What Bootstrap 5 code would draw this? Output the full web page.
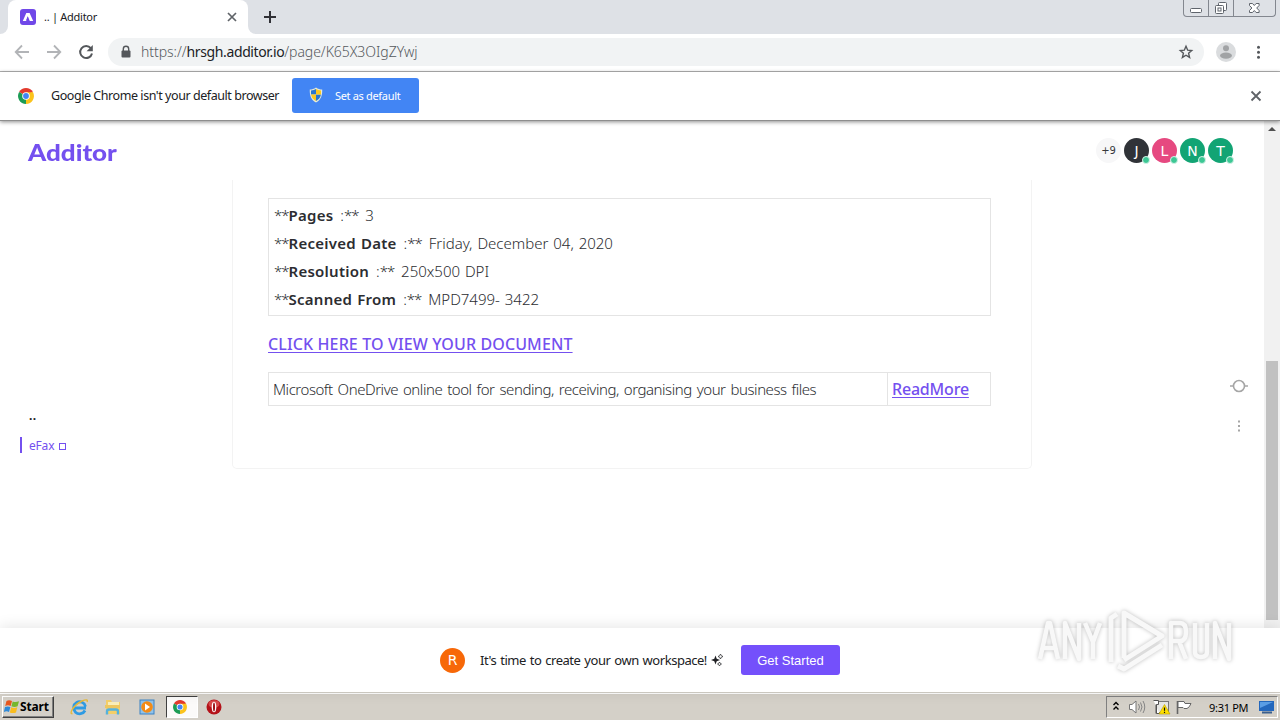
<!DOCTYPE html>
<html lang="en">
<head>
  <meta charset="UTF-8">
  <title>.. | Additor</title>
  <meta name="viewport" content="width=device-width, initial-scale=1.0"/>
  <link href="https://cdn.jsdelivr.net/npm/bootstrap@5.3.3/dist/css/bootstrap.min.css" rel="stylesheet">
  <style>
    body {
      width: 1280px;
      height: 720px;
      overflow: hidden;
      font-family: "Noto Sans", "Liberation Sans", sans-serif;
      font-size: 12px;
      line-height: 1;
      color: #202124;
      background: #fff;
    }
    span, a { white-space: nowrap; }
    svg { display: block; flex: none; }

    /* browser chrome */
    .tab-strip { height: 34px; background: #dee1e6; }
    .tab-edge { width: 8px; background: #fff; }
    .tab-edge div { height: 34px; background: #dee1e6; }
    .tab-edge.start div { border-bottom-right-radius: 8px; }
    .tab-edge.end div { border-bottom-left-radius: 8px; }
    .tab-active { width: 240px; background: #fff; border-radius: 8px 8px 0 0; padding: 0 10px 0 12px; }
    .tab-title { font-size: 11px; margin: -1px 0 0 8px; letter-spacing: -.27px; }
    .win-buttons { width: 93px; height: 17px; margin-right: 4px; border: 1px solid #83878f; border-top: 0; border-radius: 0 0 4px 4px; }
    .toolbar { height: 38px; border-bottom: 1px solid #b4b4b4; padding-bottom: 1px; }
    .omnibox { width: 1096px; height: 28px; border-radius: 14px; background: #f1f3f4; margin-left: 12px; padding: 0 10px 0 12px; }
    .url { font-size: 14px; font-weight: 300; color: #55595d; margin-left: 9px; letter-spacing: -.05px; }
    .url b { font-weight: 400; color: #202124; letter-spacing: -.38px; }
    .infobar { height: 49px; padding: 0 0 1px 18px; border-bottom: 1px solid #8e8e8e; box-shadow: 0 1px 4px rgba(0,0,0,.45); z-index: 2; }
    .info-text { font-size: 12.5px; margin-left: 17px; padding-top: 2px; width: 228px; letter-spacing: -.44px; }
    .btn-default-browser { width: 127px; height: 35px; margin-left: 13px; background: #4285f4; border-radius: 3px; color: #fff; padding: 0 0 1px 17px; font-size: 11px; letter-spacing: -.33px; }

    /* page */
    .page-body { height: 507px; }
    .page-main { width: 1264px; }
    .site-header { height: 59px; padding: 0 31px 0 28px; }
    .brand-name { font-family: Lato, sans-serif; font-weight: 900; font-size: 23px; color: #7450ef; transform: scaleX(1.13); transform-origin: left; padding-top: 3px; }
    .avatar { width: 25px; height: 25px; border-radius: 50%; color: #fff; font-family: "DejaVu Sans", sans-serif; font-size: 14px; position: relative; }
    .avatar i { position: absolute; right: -1px; bottom: -1px; width: 8px; height: 8px; border-radius: 50%; background: #3cc794; border: 1px solid #d5f3e8; }
    .avatar.more { background: #f7f7f8; color: #36373b; font-size: 10px; }
    .outline-nav { width: 232px; padding: 230px 0 0 20px; }
    .outline-title { padding-left: 9px; letter-spacing: .5px; }
    .outline-current { border-left: 2px solid #7450ef; height: 16px; padding: 2px 0 0 7px; color: #7450ef; letter-spacing: -.2px; margin-top: 15px; }
    .doc-sheet { width: 800px; height: 289px; border: 1px solid #f3f3f3; border-top: 0; border-radius: 0 0 5px 5px; padding: 18px 40px 0 35px; font-size: 15px; font-weight: 300; color: #2c2d31; }
    .doc-box { border: 1px solid #e4e4e4; }
    .fax-info { height: 118px; padding: 2px 0 0 5px; word-spacing: 1px; }
    .fax-info div { height: 28px; line-height: 28px; }
    .fax-info b { font-weight: 600; letter-spacing: .25px; margin-right: 2px; }
    .fax-info i { font-style: normal; letter-spacing: -1px; }
    .fax-info b ~ i { margin-right: 2px; }
    .doc-sheet a { color: #7450ef; font-size: 16px; font-weight: 500; text-underline-offset: 2px; text-decoration-thickness: 1px; }
    .doc-link { height: 56px; line-height: 56px; letter-spacing: .12px; }
    .tool-row { height: 34px; line-height: 33px; }
    .tool-row .first { width: 619px; padding-left: 4px; border-right: 1px solid #e4e4e4; letter-spacing: -.46px; word-spacing: 1.5px; }
    .tool-row .second { padding-left: 4px; letter-spacing: -.2px; }
    .side-tools { width: 50px; padding-top: 198px; }
    .scroll-track { width: 16px; background: #f1f1f1; }
    .scroll-thumb { width: 12px; height: 259px; margin-top: 224px; background: #c1c1c1; }
    .cta-bar { height: 64px; background: #fff; box-shadow: 0 -1px 14px rgba(0,0,0,.11); z-index: 1; }
    .cta-avatar { width: 25px; height: 25px; border-radius: 50%; background: #f76808; color: #fff; font-family: "DejaVu Sans", sans-serif; font-size: 14px; }
    .cta-text { font-size: 13px; margin-left: 15px; width: 227px; letter-spacing: -.47px; word-spacing: 1px; }
    .btn-start-now { width: 99px; height: 30px; border-radius: 3px; background: #7450fb; color: #fff; font-size: 13px; margin-left: 17px; font-family: "Liberation Sans", sans-serif; }

    /* taskbar */
    .taskbar { height: 28px; background: #d4d0c8; border-top: 1px solid #d4d0c8; box-shadow: inset 0 1px #fff; padding: 3px 2px 2px; }
    .start-button { width: 52px; height: 22px; border: 1px solid; border-color: #fff #404040 #404040 #fff; box-shadow: inset -1px -1px #808080; font-size: 12px; font-weight: 700; color: #000; padding-left: 1px; letter-spacing: -.15px; }
    .task-pressed { width: 32px; height: 22px; border: 1px solid; border-color: #404040 #fff #fff #404040; background: #fbfaf9; }
    .tray { width: 172px; height: 22px; border: 1px solid; border-color: #808080 #fff #fff #808080; color: #000; padding-left: 5px; }
    .tray-clock { width: 40px; margin-left: 13px; font-size: 11px; letter-spacing: -.3px; }
    .watermark { position: absolute; left: 1030px; top: 598px; z-index: 5; filter: drop-shadow(0 0 2px rgba(0,0,0,.26)); }
  </style>
</head>
<body class="d-flex flex-column">

  <svg width="0" height="0" class="position-absolute">
    <symbol id="chrome" viewBox="0 0 16 16">
      <path d="M8 8 1.100 4A8 8 0 0 1 14.900 4Z" fill="#e33b2e"/>
      <path d="M8 8 14.900 4A8 8 0 0 1 8 16Z" fill="#fbc31c"/>
      <path d="M8 8V16A8 8 0 0 1 1.100 4Z" fill="#1c9c55"/>
      <path d="M8 4.200H15L12 10 8 16 11 9Z" fill="#fbc31c"/>
      <circle cx="8" cy="8" r="3.800" fill="#fff"/>
      <circle cx="8" cy="8" r="2.900" fill="#4285f4"/>
    </symbol>
  </svg>

  <div class="tab-strip d-flex flex-shrink-0">
    <div class="tab-edge start"><div></div></div>
    <div class="tab-active d-flex align-items-center">
      <svg width="16" height="16" viewBox="0 0 16 16"><rect width="16" height="16" rx="3" fill="#7048e8"/><path d="M6.300 4H9.600L13.200 11.900H9.800L7.800 7.500 6.200 11.900H2.800Z" fill="#fff"/><path d="M5.800 11.900 7.700 7.200 8.500 9.500Z" fill="#7048e8"/></svg>
      <span class="tab-title">.. | Additor</span>
      <svg class="ms-auto" width="12" height="12" viewBox="0 0 12 12" stroke="#5f6368" stroke-width="1.700"><path d="M2 2 10 10M10 2 2 10"/></svg>
    </div>
    <div class="tab-edge end"><div></div></div>
    <svg class="mt-2 ms-2" width="12" height="18" viewBox="0 0 12 18" stroke="#303136" stroke-width="2"><path d="M0 9H12M6 3V15"/></svg>
    <div class="win-buttons ms-auto d-flex">
      <svg width="91" height="16" viewBox="0 0 91 16" fill="none" stroke="#5f646c">
        <path d="M24.500 0V16M49.500 0V16" stroke="#83878f"/>
        <rect x="6.500" y="8.500" width="11" height="4" rx="1" fill="#fff"/>
        <rect x="34.500" y="2.500" width="8" height="8" rx="1" fill="#fff"/>
        <rect x="31.500" y="5.500" width="8" height="8" rx="1" fill="#fff"/>
        <rect x="34" y="8" width="3" height="3"/>
        <path d="M65.500 3.500h3l1.800 2 1.800-2h3v2l-2.400 2.500 2.400 2.500v2h-3l-1.800-2-1.800 2h-3v-2l2.400-2.500-2.400-2.500z" fill="#fff"/>
      </svg>
    </div>
  </div>

  <div class="toolbar d-flex align-items-center flex-shrink-0">
    <svg width="96" height="20" viewBox="0 0 96 20" fill="none" stroke="#b2b4b7" stroke-width="1.800">
      <path d="M29 10H16M22 3.500 15.700 10 22 16.500M47 10H60M54 3.500 60.300 10 54 16.500"/>
      <path d="M90.800 6.200A6 6 0 1 0 92 11.500" stroke="#54575b" stroke-width="2"/>
      <path d="M92.800 3V9.200H86.600Z" fill="#54575b" stroke="none"/>
    </svg>
    <div class="omnibox d-flex align-items-center">
      <svg width="12" height="14" viewBox="0 0 12 14"><path d="M3.300 6V4a2.700 2.700 0 0 1 5.400 0V6" fill="none" stroke="#54575b" stroke-width="1.400"/><rect x="1.500" y="5.500" width="9" height="7" rx="1" fill="#54575b"/></svg>
      <span class="url">https://<b>hrsgh.additor.io</b>/page/K65X3OIgZYwj</span>
      <svg class="ms-auto" width="16" height="16" viewBox="0 0 16 16"><path d="M8 2.200 9.700 6.200l4 .4-3.100 2.700 1 4.100L8 11.200 4.400 13.400l1-4.100L2.300 6.600l4-.4Z" fill="none" stroke="#54575b" stroke-width="1.400"/></svg>
    </div>
    <svg width="64" height="20" viewBox="0 0 64 20" class="ms-2">
      <circle cx="14" cy="10" r="10" fill="#dadcde"/><circle cx="14" cy="6.200" r="3" fill="#a1a3a5"/><ellipse cx="14" cy="13.600" rx="6" ry="3.100" fill="#a1a3a5"/>
      <g fill="#54575b"><circle cx="46.500" cy="5.300" r="1.500"/><circle cx="46.500" cy="10.300" r="1.500"/><circle cx="46.500" cy="15.300" r="1.500"/></g>
    </svg>
  </div>

  <div class="infobar d-flex align-items-center flex-shrink-0 bg-white position-relative">
    <svg width="16" height="16"><use href="#chrome"/></svg>
    <span class="info-text">Google Chrome isn't your default browser</span>
    <div class="btn-default-browser d-flex align-items-center">
      <svg width="14" height="16" viewBox="0 0 14 16"><path d="M7 .5C5 2 3 2.500.8 2.500.5 8 2 13 7 15.500 12 13 13.500 8 13.200 2.500 11 2.500 9 2 7 .5Z" fill="#e5ead9"/><path d="M7 2V7.500H2V3.500Q5 3.400 7 2ZM7 7.500H12Q11 12 7 14Z" fill="#2876cf"/><path d="M7 2V7.500H12V3.500Q9 3.400 7 2ZM7 7.500H2Q3 12 7 14Z" fill="#fbc81e"/></svg>
      <span class="ms-2 ps-1">Set as default</span>
    </div>
    <svg class="ms-auto me-3" width="16" height="16" viewBox="0 0 16 16" stroke="#5f6368" stroke-width="1.800"><path d="M3.500 3.500 12.500 12.500M12.500 3.500 3.500 12.500"/></svg>
  </div>

  <div class="page-body d-flex flex-shrink-0">
    <div class="page-main">
      <div class="site-header d-flex align-items-center">
        <span class="brand-name">Additor</span>
        <div class="d-flex ms-auto" style="gap: 3px">
          <div class="avatar more d-flex align-items-center justify-content-center"><span>+9</span></div>
          <div class="avatar d-flex align-items-center justify-content-center" style="background: #303338">J<i></i></div>
          <div class="avatar d-flex align-items-center justify-content-center" style="background: #e64980">L<i></i></div>
          <div class="avatar d-flex align-items-center justify-content-center" style="background: #12a474">N<i></i></div>
          <div class="avatar d-flex align-items-center justify-content-center" style="background: #12a474">T<i></i></div>
        </div>
      </div>
      <div class="d-flex">
        <div class="outline-nav">
          <div class="outline-title fw-bold">..</div>
          <div class="outline-current d-flex align-items-center">
            <span>eFax</span>
            <svg class="ms-1" width="9" height="9" viewBox="0 0 9 9"><rect x="1.500" y="1.500" width="6" height="6" fill="none" stroke="#7450ef"/></svg>
          </div>
        </div>
        <div class="doc-sheet">
          <div class="doc-box fax-info">
            <div><span><i>**</i><b>Pages</b> :<i>**</i> 3</span></div>
            <div><span><i>**</i><b>Received Date</b> :<i>**</i> Friday, December 04, 2020</span></div>
            <div><span><i>**</i><b>Resolution</b> :<i>**</i> 250x500 DPI</span></div>
            <div><span><i>**</i><b>Scanned From</b> :<i>**</i> MPD7499- 3422</span></div>
          </div>
          <div class="doc-link"><a href="#">CLICK HERE TO VIEW YOUR DOCUMENT</a></div>
          <div class="doc-box tool-row d-flex">
            <div class="first"><span>Microsoft OneDrive online tool for sending, receiving, organising your business files</span></div>
            <div class="second"><a href="#">ReadMore</a></div>
          </div>
        </div>
        <div class="side-tools ms-auto">
          <svg width="50" height="60" viewBox="0 0 50 60" fill="none" stroke="#a6a6a6" stroke-width="1.600"><circle cx="25" cy="8" r="5.500"/><path d="M16 8H19.500M30.500 8H34"/><path d="M25 42.500v2M25 47v2M25 51.500v2" stroke-width="2"/></svg>
        </div>
      </div>
    </div>
    <div class="scroll-track d-flex flex-column align-items-center">
      <svg class="mt-1" width="8" height="12" viewBox="0 0 8 12"><path d="M0 6 4 2 8 6Z" fill="#505050"/></svg>
      <div class="scroll-thumb"></div>
    </div>
  </div>

  <div class="cta-bar d-flex align-items-center justify-content-center flex-shrink-0 position-relative">
    <div class="cta-avatar d-flex align-items-center justify-content-center">R</div>
    <span class="cta-text">It's time to create your own workspace!</span>
    <svg class="ms-1" width="13" height="14" viewBox="0 0 13 14"><path d="M4.500 2.500 5.700 5.800 9 7 5.700 8.200 4.500 11.500 3.300 8.200 0 7 3.300 5.800Z" fill="#202124"/><path d="M9.500 1 10.300 2.700 12 3.500 10.300 4.300 9.500 6 8.700 4.300 7 3.500 8.700 2.700ZM8.500 9 9.200 10.300 10.500 11 9.200 11.700 8.500 13 7.800 11.700 6.500 11 7.800 10.300Z" fill="none" stroke="#202124" stroke-width=".7"/></svg>
    <div class="btn-start-now d-flex align-items-center justify-content-center"><span>Get Started</span></div>
  </div>

  <div class="taskbar d-flex align-items-center flex-shrink-0">
    <div class="start-button d-flex align-items-center">
      <svg width="16" height="16" viewBox="0 0 16 16"><path d="M2.500 2Q5 .5 8 2L6.700 7Q4 5.700 1.200 7Z" fill="#e8581f"/><path d="M8.700 2.400Q11.500 3.700 15 2.200L13.600 7.300Q10.500 8.500 7.400 7.300Z" fill="#76b82f"/><path d="M1 8Q3.700 6.800 6.400 8L5 13Q2.500 11.700-.2 13Z" fill="#2f8ad8"/><path d="M7.200 8.300Q10 9.500 13.300 8.300L12 13.400Q9 14.700 5.800 13.400Z" fill="#f9bd20"/></svg>
      <span>Start</span>
    </div>
    <svg width="112" height="20" viewBox="0 0 112 20" fill="none">
      <path d="M32 11H20M31 13.500A6 6 0 1 1 31.500 9.500" stroke="#2f9be3" stroke-width="2.800"/>
      <path d="M18.500 16.500C15 18 18 9 28 4 33 2 34 3 33 5" stroke="#e6b93a" stroke-width="1.400"/>
      <path d="M52 3h5l1 2h8v12H52Z" fill="#f4cf68"/><path d="M54 5h11v6H54Z" fill="#f9eeb9"/><path d="M51 8h15v3H51Z" fill="#edc760"/><path d="M53 17.500v-3q0-2 2-2h7q2 0 2 2v3" stroke="#55b2dc" stroke-width="2.400"/>
      <rect x="86" y="3" width="14" height="14" fill="#8fc2ea" stroke="#3a82c4"/><circle cx="93" cy="10" r="5.800" fill="#f38b16"/><path d="M91 6.500v7l5-3.500Z" fill="#fff"/>
    </svg>
    <div class="task-pressed d-flex align-items-center justify-content-center pe-1"><svg width="14" height="14"><use href="#chrome"/></svg></div>
    <svg class="ms-2" width="16" height="16" viewBox="0 0 16 16"><circle cx="8" cy="8" r="7.500" fill="#b41219"/><ellipse cx="8" cy="5" rx="5.500" ry="3.800" fill="#d84a4b"/><ellipse cx="8" cy="8" rx="2.300" ry="5.300" fill="#fff"/><ellipse cx="8" cy="8" rx="1" ry="4.500" fill="#9d1016"/></svg>
    <div class="tray ms-auto d-flex align-items-center">
      <svg width="84" height="20" viewBox="0 0 84 20" fill="none">
        <path d="M1.500 8 4 5.500 6.500 8M1.500 12.500 4 10 6.500 12.500" stroke="#000" stroke-width="1.400"/>
        <path d="M17.500 7.500H20L24 4V16L20 12.500H17.500Z" fill="#fff" stroke="#777"/><path d="M26.500 7q2 3 0 6M28.500 5.500q3 4.500 0 9M31 4q3.500 6 0 12" stroke="#858585"/>
        <rect x="44.500" y="4.500" width="12" height="11" fill="#e6e6e3" stroke="#777"/><path d="M41.500 3.500h5v4h-2v9h3M44 7.500v9" stroke="#555" fill="#fff"/><path d="M52.500 7.500 58 17H47Z" fill="#ffe000" stroke="#b69c00" stroke-width=".6"/><path d="M52.500 10.500v3.300M52.500 14.800v1.200" stroke="#111" stroke-width="1.200"/>
        <path d="M65.500 4V17" stroke="#666" stroke-width="1.600"/><path d="M66 4.500h6l1 2h6q-1.500 4-4 5h-3l-1-1h-5Z" fill="#fff" stroke="#666"/>
      </svg>
      <span class="tray-clock">9:31 PM</span>
      <svg class="ms-auto" width="18" height="16" viewBox="0 0 18 16"><path d="M0 2H15V12H0Z" fill="#2468bd"/><path d="M1 3H14L1 9Z" fill="#5b9ee5"/><path d="M3 13.500h10" stroke="#3a5f8d" stroke-width="2"/></svg>
    </div>
  </div>

  <svg class="watermark" width="210" height="84" viewBox="0 0 210 84" fill="none" stroke="#f8f8f8" stroke-linejoin="round">
    <path stroke-width="4.500" d="M10 61 18 25H20L28 61M13 50H25M35 61V25L49 61V25M55 25 63 44 70 25M63 44V61M141 61V25H150Q156 25 156 34 156 43 150 43H141M149 43 156 61M165 25V54Q165 59 171 59 177 59 177 54V25M185 61V25L199 61V25"/>
    <path stroke-width="5" d="M81 64V20L87 16M94 60V15L132 38L94 62M88 68 94 71 132 47"/>
  </svg>

  <script src="https://cdn.jsdelivr.net/npm/bootstrap@5.3.3/dist/js/bootstrap.bundle.min.js"></script>
</body>
</html>
